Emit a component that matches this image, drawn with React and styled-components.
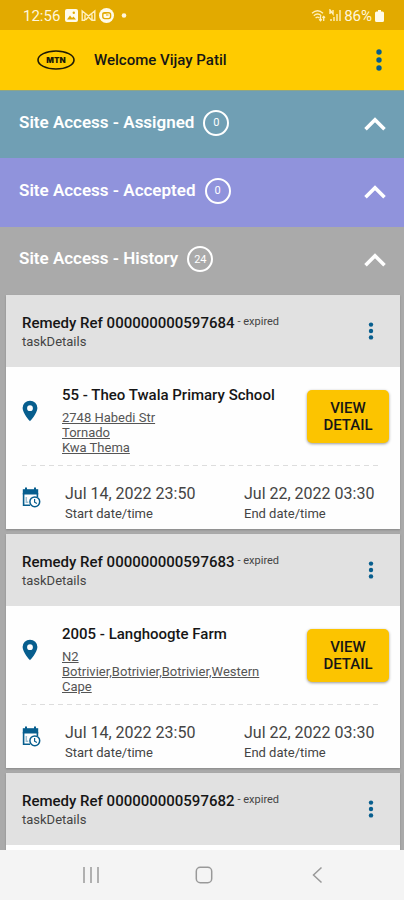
import React from "react";
import styled, { createGlobalStyle } from "styled-components";

const GlobalStyle = createGlobalStyle`
  *, *::before, *::after { box-sizing: border-box; }
  body { margin: 0; font-family: Roboto, sans-serif; color: #161616; background: #aaa; }
  h1, h2, h3, p { margin: 0; }
  button { font-family: inherit; color: inherit; border: 0; padding: 0; background: none; cursor: pointer; }
`;

const Screen = styled.div`
  display: flex;
  flex-direction: column;
  height: 100vh;
  overflow: hidden;
`;

const StatusBar = styled.div`
  flex: none;
  display: flex;
  align-items: center;
  justify-content: space-between;
  height: 30px;
  padding: 1px 20px 0 23px;
  background: #e2aa00;
  color: #fff6dc;
  font-size: 15px;
`;

const StatusGroup = styled.div`
  display: flex;
  align-items: center;
  gap: ${({ $gap }) => $gap}px;
`;

const StatusIcons = styled.div`
  display: flex;
  align-items: center;
  gap: 3px;
`;

const AppBar = styled.header`
  flex: none;
  display: flex;
  align-items: center;
  height: 61px;
  padding: 0 15px 0 37px;
  background: #ffcb00;
  border-bottom: 1px solid #8fa585;
`;

const Welcome = styled.h1`
  flex: 1;
  margin-left: 19px;
  font-size: 15px;
  line-height: 20px;
  font-weight: 500;
`;

const MenuButton = styled.button`
  display: flex;
  align-items: center;
  justify-content: center;
  width: 20px;
  height: 32px;
  color: #075e8e;
`;

const Content = styled.main`
  flex: 1;
  min-height: 0;
  overflow: hidden;
`;

const SectionHeading = styled.h2`
  font-size: 17px;
  line-height: 24px;
`;

const SectionToggle = styled.button`
  display: flex;
  align-items: center;
  width: 100%;
  height: ${({ $height }) => $height}px;
  padding: 0 17px 6px 19px;
  background: ${({ $color }) => $color};
  color: #fff;
  font-size: 17px;
  font-weight: 600;
  text-align: left;

  svg { margin: 4px 0 0 auto; }
`;

const Count = styled.span`
  display: flex;
  align-items: center;
  justify-content: center;
  width: 26px;
  height: 26px;
  margin: 2px 0 0 9px;
  border: 2px solid #fff;
  border-radius: 50%;
  font-size: 11px;
  font-weight: 400;
`;

const CardList = styled.div`
  display: flex;
  flex-direction: column;
  gap: 5px;
  padding: 0 4px 5px 6px;
  background: #aaa;
`;

const Card = styled.article`
  background: #fefefe;
  box-shadow: 0 1px 2px #888;
`;

const CardHeader = styled.header`
  display: flex;
  align-items: center;
  justify-content: space-between;
  height: 72px;
  padding: 0 19px 0 16px;
  background: #e1e1e1;
`;

const Reference = styled.h3`
  font-size: 15px;
  line-height: 20px;
  font-weight: 500;
`;

const Status = styled.span`
  margin-left: 3px;
  color: #444;
  font-size: 11px;
  font-weight: 400;
  vertical-align: 3px;
`;

const Caption = styled.p`
  color: #444;
  font-size: 13px;
  line-height: 18px;
`;

const CardBody = styled.div`
  padding: 0 11px 0 16px;
`;

const SiteRow = styled.div`
  display: grid;
  grid-template-columns: 40px 1fr 82px;
  height: 98px;
  padding-top: 18px;
`;

const SiteInfo = styled.div`
  padding-right: 24px;
`;

const SiteName = styled.h3`
  margin: 0 -24px 5px 0;
  font-size: 15px;
  line-height: 20px;
  font-weight: 500;
`;

const Address = styled.a`
  display: block;
  color: #555;
  font-size: 13px;
  line-height: 15px;
  white-space: pre-line;
  text-decoration: underline;
`;

const IconSlot = styled.span`
  display: flex;
  padding-top: ${({ $top }) => $top}px;
`;

const DetailButton = styled.button`
  align-self: start;
  height: 53px;
  margin-top: 5px;
  padding: 0 12px;
  border-radius: 5px;
  background: #fcc400;
  box-shadow: 0 1px 3px rgba(0, 0, 0, 0.4);
  font-size: 15px;
  line-height: 17px;
  font-weight: 500;
`;

const DashedLine = styled.hr`
  height: 1px;
  margin: 0 8px 0 0;
  border: 0;
  background: repeating-linear-gradient(90deg, #ddd 0 5px, transparent 5px 9px);
`;

const DateRow = styled.div`
  display: grid;
  grid-template-columns: 43px 179fr 145fr;
  height: 63px;
  padding-top: 17px;
`;

const DateItem = styled.div`
  display: flex;
  flex-direction: column;
`;

const DateValue = styled.p`
  color: #444;
  font-size: 16px;
  line-height: 22px;
  white-space: nowrap;
`;

const NavBar = styled.nav`
  flex: none;
  display: flex;
  align-items: center;
  justify-content: space-around;
  height: 50px;
  padding: 0 31px 0 34px;
  background: #f4f4f4;
  color: #999;
`;

const NavButton = styled.button`
  display: flex;
  align-items: center;
  justify-content: center;
  width: 40px;
  height: 40px;
`;

const PictureIcon = () => (
  <svg width="13" height="13" viewBox="0 0 13 13" aria-hidden="true">
    <rect width="13" height="13" rx="2" fill="#fffbe9" />
    <path d="M2 10.5 5 6.5 7 9l1.5-1.5 2.5 3z" fill="#e2aa00" />
    <circle cx="8.8" cy="3.8" r="1.2" fill="#e2aa00" />
  </svg>
);

const MailIcon = () => (
  <svg width="15" height="13" viewBox="0 0 15 13" fill="none" stroke="#fff0bd" strokeWidth="1.4" aria-hidden="true">
    <path d="M4 11.3H1.2V2l6.3 5L13.8 2v9.3H11V5.5M4 11.3V5.5M4.5 11l3-3 3 3" />
  </svg>
);

const ChatIcon = () => (
  <svg width="15" height="15" viewBox="0 0 15 15" aria-hidden="true">
    <circle cx="7.5" cy="7.5" r="7.5" fill="#fffbe9" />
    <rect x="3.8" y="4.8" width="7.8" height="5.8" rx="2" fill="none" stroke="#e2aa00" strokeWidth="1.4" />
    <path d="M3.5 5.2h4M7 7h2.500" stroke="#e2aa00" strokeWidth="1" />
  </svg>
);

const DotIcon = () => (
  <svg width="10" height="5" viewBox="0 0 10 5" aria-hidden="true">
    <circle cx="7" cy="2.5" r="2.3" fill="#fff6dc" />
  </svg>
);

const WifiIcon = () => (
  <svg width="15" height="13" viewBox="0 0 15 13" fill="none" stroke="#fff0bd" strokeWidth="1.3" aria-hidden="true">
    <path d="M1 4.3Q6.5-.8 12 4.3M2.8 6.7q3.7-3.3 7.4 0M4.6 9q1.9-1.7 3.8 0M9.5 7v4.5M8.2 10.2l1.3 1.5 1.3-1.500M12.7 12V7.5M11.4 8.8l1.3-1.4L14 8.8" />
  </svg>
);

const SignalIcon = () => (
  <svg width="12" height="13" viewBox="0 0 12 13" fill="none" stroke="#fff0bd" strokeWidth="1.4" aria-hidden="true">
    <path d="M1 5V1l3 4V1M2 12v-2M5 12V8M8 12V5M11 12V1" />
  </svg>
);

const BatteryIcon = () => (
  <svg width="9" height="12" viewBox="0 0 9 12" fill="#fffbe9" aria-hidden="true">
    <path d="M3 0h3v1.5h1.500Q9 1.500 9 3v7.500Q9 12 7.500 12h-6Q0 12 0 10.500V3q0-1.500 1.500-1.500H3z" />
  </svg>
);

const MtnLogo = () => (
  <svg width="38" height="20" viewBox="0 0 38 20" role="img" aria-label="MTN">
    <ellipse cx="19" cy="10" rx="18" ry="9" fill="none" stroke="#201b05" strokeWidth="1.6" />
    <text x="19" y="13" textAnchor="middle" fontFamily="Inter, sans-serif" fontSize="8" fontWeight="900" fill="#201b05">MTN</text>
  </svg>
);

const DotsIcon = ({ large }) => (
  <svg width="6" height={large ? 22 : 18} viewBox={large ? "0 0 6 22" : "0 0 6 18"} fill="currentColor" aria-hidden="true">
    <circle cx="3" cy={large ? 3 : 2.6} r={large ? 2.7 : 2.2} />
    <circle cx="3" cy={large ? 11 : 9} r={large ? 2.7 : 2.2} />
    <circle cx="3" cy={large ? 19 : 15.4} r={large ? 2.7 : 2.2} />
  </svg>
);

const ChevronUp = () => (
  <svg width="24" height="16" viewBox="0 0 24 16" fill="none" stroke="#fff" strokeWidth="3.6" aria-hidden="true">
    <path d="M2.500 13.300 12 3.800l9.500 9.500" />
  </svg>
);

const PinIcon = () => (
  <svg width="16" height="22" viewBox="0 0 16 22" aria-hidden="true">
    <path fillRule="evenodd" fill="#075e8e" d="M8 .7A7.400 7.400 0 0 0 .6 8.100C.6 13.500 8 21.300 8 21.300s7.400-7.800 7.400-13.200A7.400 7.400 0 0 0 8 .7Zm0 4.600a2.900 2.900 0 1 1 0 5.800 2.900 2.900 0 0 1 0-5.800Z" />
  </svg>
);

const CalendarIcon = () => (
  <svg width="19" height="21" viewBox="0 0 19 21" fill="none" stroke="#075e8e" aria-hidden="true">
    <path d="M.8 2.200h15.400v5.300H.8z" fill="#075e8e" stroke="none" />
    <path d="M4 .5v3M13 .5v3" strokeWidth="2" />
    <path d="M1.600 6v12.200h6.400M15.400 6v4" strokeWidth="1.600" />
    <path d="M4.300 10v5.200h2" strokeWidth="1.500" opacity=".4" />
    <circle cx="12.800" cy="14.800" r="4.900" fill="#fff" strokeWidth="1.500" />
    <path d="M12.600 12v3.200l2.300 1.400" strokeWidth="1.200" />
  </svg>
);

const RecentsIcon = () => (
  <svg width="18" height="18" viewBox="0 0 18 18" stroke="currentColor" strokeWidth="1.500" aria-hidden="true">
    <path d="M2 1v16M9 1v16M16 1v16" />
  </svg>
);

const HomeIcon = () => (
  <svg width="18" height="18" viewBox="0 0 18 18" fill="none" stroke="currentColor" strokeWidth="1.500" aria-hidden="true">
    <rect x="1.300" y="1.300" width="15.400" height="15.400" rx="4" />
  </svg>
);

const BackIcon = () => (
  <svg width="12" height="18" viewBox="0 0 12 18" fill="none" stroke="currentColor" strokeWidth="1.500" aria-hidden="true">
    <path d="m10.500 1.500-8 7.500 8 7.500" />
  </svg>
);

const sections = [
  { name: "Assigned", count: 0, color: "#709fb4", height: 67 },
  { name: "Accepted", count: 0, color: "#9093dc", height: 69 },
  { name: "History", count: 24, color: "#aaa", height: 68 },
];

const tasks = [
  {
    reference: "000000000597684",
    site: "55 - Theo Twala Primary School",
    address: "2748 Habedi Str\nTornado\nKwa Thema",
    start: "Jul 14, 2022 23:50",
    end: "Jul 22, 2022 03:30",
  },
  {
    reference: "000000000597683",
    site: "2005 - Langhoogte Farm",
    address: "N2\nBotrivier,Botrivier,Botrivier,Western Cape",
    start: "Jul 14, 2022 23:50",
    end: "Jul 22, 2022 03:30",
  },
  { reference: "000000000597682" },
];

function TaskDetails({ task }) {
  return (
    <>
      <SiteRow>
        <IconSlot $top={15}><PinIcon /></IconSlot>
        <SiteInfo>
          <SiteName>{task.site}</SiteName>
          <Address href="#map">{task.address}</Address>
        </SiteInfo>
        <DetailButton type="button">VIEW DETAIL</DetailButton>
      </SiteRow>
      <DashedLine />
      <DateRow>
        <IconSlot $top={4}><CalendarIcon /></IconSlot>
        <DateItem>
          <DateValue>{task.start}</DateValue>
          <Caption>Start date/time</Caption>
        </DateItem>
        <DateItem>
          <DateValue>{task.end}</DateValue>
          <Caption>End date/time</Caption>
        </DateItem>
      </DateRow>
    </>
  );
}

function TaskCard({ task }) {
  return (
    <Card>
      <CardHeader>
        <div>
          <Reference>
            Remedy Ref {task.reference}
            <Status>- expired</Status>
          </Reference>
          <Caption>taskDetails</Caption>
        </div>
        <MenuButton type="button" aria-label="Task options"><DotsIcon /></MenuButton>
      </CardHeader>
      <CardBody>{task.site ? <TaskDetails task={task} /> : <SiteRow />}</CardBody>
    </Card>
  );
}

export default function App() {
  return (
    <Screen>
      <GlobalStyle />
      <StatusBar>
        <StatusGroup $gap={5}>
          <span>12:56</span>
          <StatusIcons>
            <PictureIcon />
            <MailIcon />
            <ChatIcon />
            <DotIcon />
          </StatusIcons>
        </StatusGroup>
        <StatusGroup $gap={3}>
          <StatusIcons>
            <WifiIcon />
            <SignalIcon />
          </StatusIcons>
          <span>86%</span>
          <BatteryIcon />
        </StatusGroup>
      </StatusBar>
      <AppBar>
        <MtnLogo />
        <Welcome>Welcome Vijay Patil</Welcome>
        <MenuButton type="button" aria-label="Menu"><DotsIcon large /></MenuButton>
      </AppBar>
      <Content>
        {sections.map((section) => (
          <SectionHeading key={section.name}>
            <SectionToggle type="button" $color={section.color} $height={section.height}>
              Site Access - {section.name}
              <Count>{section.count}</Count>
              <ChevronUp />
            </SectionToggle>
          </SectionHeading>
        ))}
        <CardList>
          {tasks.map((task) => <TaskCard key={task.reference} task={task} />)}
        </CardList>
      </Content>
      <NavBar aria-label="System">
        <NavButton type="button" aria-label="Recent apps"><RecentsIcon /></NavButton>
        <NavButton type="button" aria-label="Home"><HomeIcon /></NavButton>
        <NavButton type="button" aria-label="Back"><BackIcon /></NavButton>
      </NavBar>
    </Screen>
  );
}
